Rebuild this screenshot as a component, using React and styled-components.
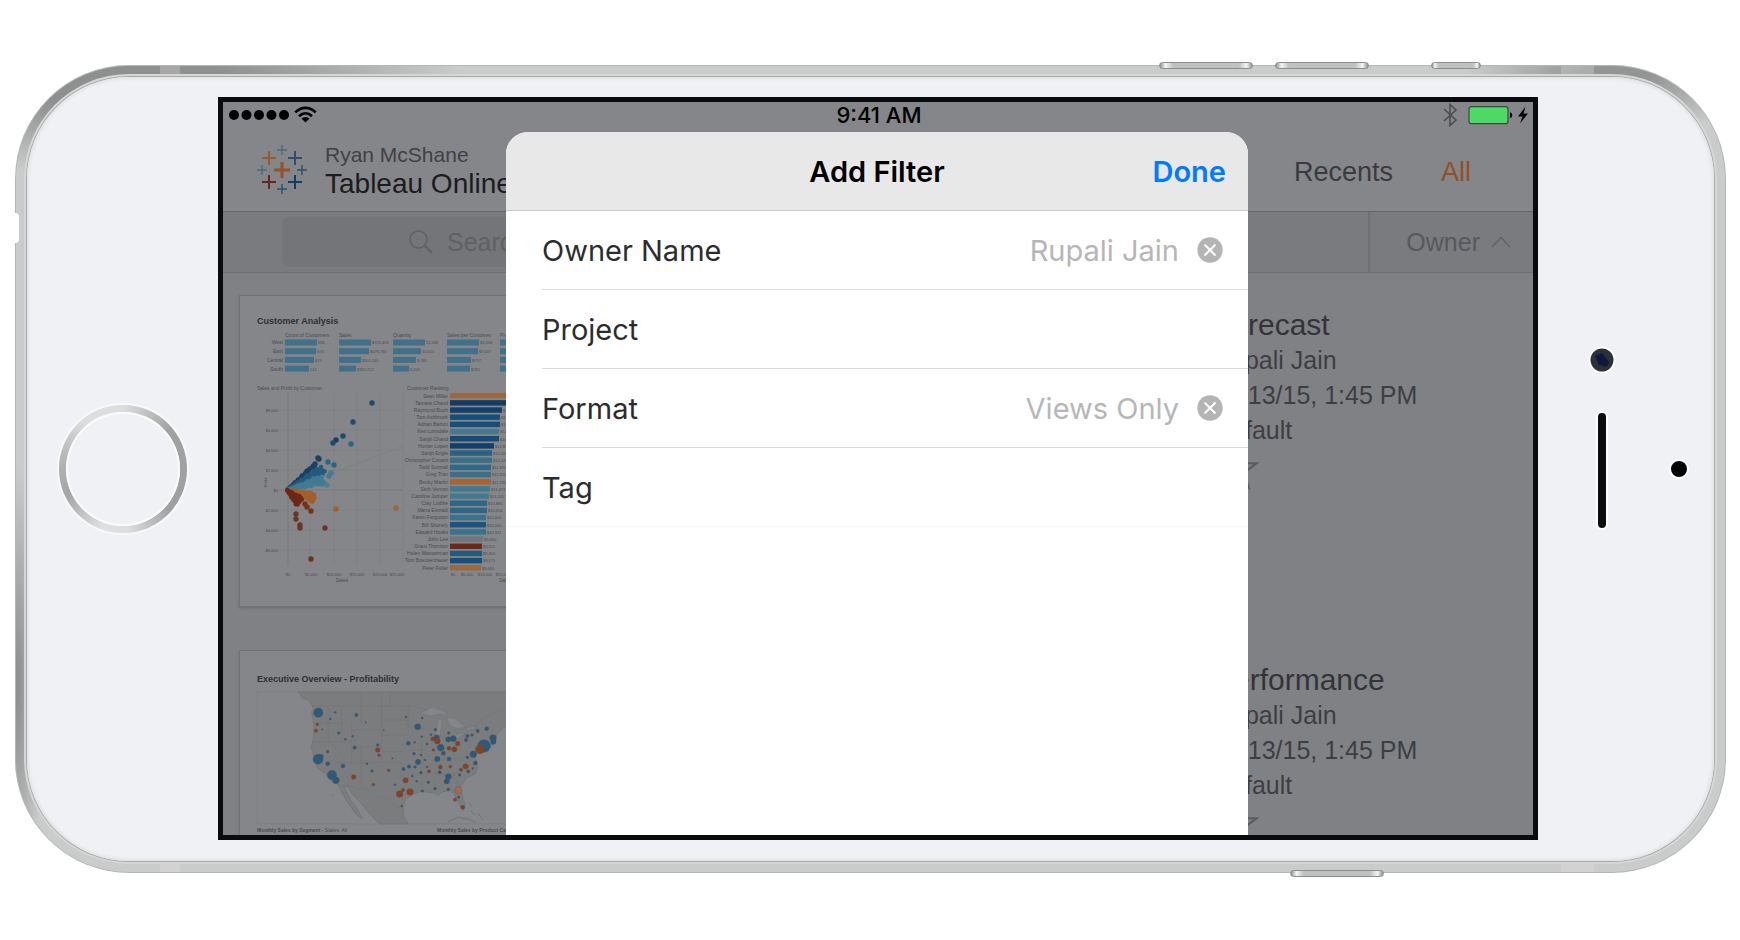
import { useState } from "react";
import styled, { createGlobalStyle } from "styled-components";

const GlobalStyle = createGlobalStyle`
	*, *::before, *::after {
		box-sizing: border-box;
	}
	body {
		margin: 0;
		background-color: #fff;
		font-family: "Liberation Sans", Arial, sans-serif;
	}
	button, input {
		font: inherit;
		color: inherit;
		background: none;
		border: none;
		padding: 0;
	}
	ul {
		list-style: none;
		margin: 0;
		padding: 0;
	}
`;

const REGIONS = ["West", "East", "Central", "South"];

const SUMMARY = [
	{ title: "Count of Customers", x: 45, widths: [32, 31, 29, 24], values: ["686", "674", "629", "512"] },
	{ title: "Sales", x: 99, widths: [32, 30, 22, 17], values: ["$725,458", "$678,781", "$501,240", "$391,722"] },
	{ title: "Quantity", x: 153, widths: [32, 28, 23, 16], values: ["12,266", "10,615", "8,780", "6,209"] },
	{ title: "Sales per Customer", x: 207, widths: [32, 31, 24, 23], values: ["$1,058", "$1,007", "$797", "$765"] },
	{ title: "Profit", x: 260, widths: [32, 31, 24, 23], values: ["", "", "", ""] },
];

const RANKING = [
	["Sean Miller", 60, "#9c6840", ""],
	["Tamara Chand", 60, "#123b66", ""],
	["Raymond Buch", 52, "#123f6c", "$14,"],
	["Tom Ashbrook", 50, "#174f7c", "$14,"],
	["Adrian Barton", 50, "#174f7c", "$14,"],
	["Ken Lonsdale", 49, "#46788e", "$14,"],
	["Sanjit Chand", 49, "#184a74", "$14,"],
	["Hunter Lopez", 44, "#123f6c", "$12,873"],
	["Sanjit Engle", 42, "#2a617f", "$12,209"],
	["Christopher Conant", 42, "#3a7088", "$12,129"],
	["Todd Sumrall", 41, "#30688a", "$11,890"],
	["Greg Tran", 41, "#3a7088", "$11,820"],
	["Becky Martin", 41, "#a76431", "$11,790"],
	["Seth Vernon", 40, "#417a90", "$11,471"],
	["Caroline Jumper", 39, "#417a90", "$11,165"],
	["Clay Ludtke", 37, "#2f6685", "$10,880"],
	["Maria Etezadi", 37, "#2f6685", "$10,664"],
	["Karen Ferguson", 36, "#39728c", "$10,606"],
	["Bill Shonely", 36, "#1c547e", "$10,500"],
	["Edward Hooks", 36, "#39728c", "$10,311"],
	["John Lee", 33, "#6c7780", "$9,800"],
	["Grant Thornton", 32, "#6c2818", "$9,351"],
	["Helen Wasserman", 32, "#225b80", "$9,300"],
	["Tom Boeckenhauer", 32, "#174f7c", "$9,175"],
	["Peter Fuller", 31, "#9c6840", "$9,063"],
];

const OUTLIERS = [
	[132, 107, "#1f4a6c"], [113, 126, "#1f4a6c"], [103, 140, "#1f4a6c"], [96, 144, "#1a4063"],
	[93, 147, "#1f4a6c"], [111, 148, "#2b6486"], [79, 163, "#1a4063"], [78, 162, "#1a4063"],
	[75, 168, "#1a4063"], [88, 166, "#2b6486"], [94, 169, "#2b6486"], [91, 177, "#417a92"],
	[89, 180, "#417a92"], [87, 189, "#4d7f94"], [96, 213, "#a35f2b"], [156, 212, "#9c6840"],
	[56, 218, "#6f321f"], [56, 223, "#6f321f"], [60, 229, "#6f321f"], [60, 232, "#6f321f"],
	[85, 232, "#6f321f"], [71, 263, "#6f321f"], [67, 211, "#7a3018"], [71, 215, "#7a3018"],
	[65, 208, "#7a3018"], [74, 202, "#a35f2b"], [72, 205, "#a35f2b"], [69, 203, "#a35f2b"],
];

// Fans of customers spreading out from the $0 / $0 corner
const FANS = [
	{ length: 36, from: -0.78, to: -0.62, color: "#1a4063" },
	{ length: 42, from: -0.64, to: -0.42, color: "#255a7c" },
	{ length: 38, from: -0.42, to: -0.14, color: "#417a92" },
	{ length: 28, from: 0.1, to: 0.45, color: "#a35f2b" },
	{ length: 18, from: 0.45, to: 1.05, color: "#6c2818" },
];

const fanDots = FANS.flatMap((fan) =>
	Array.from({ length: 46 }, (_, i) => {
		const r = (fan.length * (i + 1)) / 46;
		const angle = fan.from + (fan.to - fan.from) * ((i * 0.618) % 1);
		return { x: 47 + r * Math.cos(angle), y: 194 + r * Math.sin(angle), color: fan.color };
	})
);

const BLUE = "#2d5a7a";
const RUST = "#874222";

const CITIES = [
	[250, 218, 14, BLUE], [249, 358, 15, BLUE], [258, 350, 7, BLUE], [291, 405, 14, BLUE], [303, 421, 10, BLUE],
	[364, 225, 5, BLUE], [301, 217, 3, BLUE], [286, 237, 3, BLUE], [311, 279, 4, BLUE], [331, 298, 3, BLUE],
	[353, 289, 3, BLUE], [359, 323, 5, BLUE], [278, 335, 4, BLUE], [278, 371, 6, BLUE], [324, 378, 6, BLUE],
	[247, 253, 4, RUST], [243, 272, 5, RUST], [262, 268, 2, RUST], [356, 411, 7, RUST], [428, 330, 7, RUST],
	[428, 315, 4, BLUE], [432, 346, 4, RUST], [446, 270, 2, BLUE], [392, 247, 2, BLUE], [396, 371, 3, BLUE],
	[411, 393, 4, BLUE], [461, 391, 4, RUST], [415, 434, 4, RUST], [472, 355, 2, BLUE], [513, 231, 3, BLUE],
	[548, 260, 9, BLUE], [520, 310, 6, BLUE], [562, 234, 3, BLUE], [601, 269, 4, BLUE], [605, 292, 8, BLUE],
	[593, 297, 6, RUST], [607, 303, 9, RUST], [617, 323, 10, BLUE], [595, 330, 4, RUST], [607, 357, 8, BLUE],
	[625, 340, 6, BLUE], [640, 298, 8, BLUE], [655, 296, 9, BLUE], [668, 311, 7, RUST], [658, 328, 8, RUST],
	[642, 325, 6, RUST], [642, 357, 6, BLUE], [641, 279, 4, BLUE], [693, 300, 5, BLUE], [697, 288, 5, BLUE],
	[711, 285, 4, BLUE], [728, 273, 5, BLUE], [755, 266, 6, BLUE], [774, 294, 10, BLUE], [775, 305, 8, BLUE],
	[747, 318, 19, BLUE], [735, 328, 13, RUST], [715, 343, 10, BLUE], [697, 352, 4, BLUE], [721, 369, 6, BLUE],
	[692, 379, 8, RUST], [678, 389, 5, RUST], [713, 385, 3, RUST], [700, 394, 5, BLUE], [674, 405, 4, BLUE],
	[646, 380, 4, RUST], [616, 381, 6, RUST], [614, 397, 5, BLUE], [640, 410, 9, BLUE], [635, 424, 8, BLUE],
	[582, 394, 5, RUST], [580, 427, 4, BLUE], [549, 366, 8, BLUE], [537, 341, 4, BLUE], [558, 345, 3, BLUE],
	[522, 380, 5, BLUE], [540, 381, 4, BLUE], [506, 387, 5, BLUE], [558, 398, 4, BLUE], [512, 421, 8, RUST],
	[504, 450, 5, RUST], [494, 462, 10, RUST], [525, 456, 10, RUST], [562, 453, 4, BLUE], [600, 446, 4, BLUE],
	[500, 498, 3, RUST], [670, 451, 11, "#9c6d50"], [671, 471, 4, BLUE], [660, 479, 5, RUST], [683, 502, 6, RUST],
	[640, 448, 4, BLUE], [539, 307, 3, BLUE], [560, 290, 3, BLUE], [576, 312, 3, BLUE], [588, 284, 3, BLUE],
	[480, 434, 3, BLUE], [532, 408, 3, BLUE], [545, 424, 3, BLUE], [570, 360, 3, BLUE], [576, 381, 3, BLUE],
];

const WORKBOOKS = [
	{ title: "Forecast", owner: "Rupali Jain", date: "10/13/15, 1:45 PM", project: "Default", Chart: CustomerChart },
	{ title: "Performance", owner: "Rupali Jain", date: "10/13/15, 1:45 PM", project: "Default", Chart: ProfitMap },
];

const LOGO = [
	{ x: 25, y: 25, r: 8, w: 3, color: "#96502a" },
	{ x: 12, y: 13, r: 7, w: 2, color: "#965a2c" },
	{ x: 38, y: 13, r: 7, w: 2, color: "#2c4f6e" },
	{ x: 12, y: 37, r: 7, w: 2, color: "#65291c" },
	{ x: 38, y: 37, r: 7, w: 2, color: "#163a62" },
	{ x: 25, y: 5, r: 5, w: 1.4, color: "#4a6a7c" },
	{ x: 5, y: 25, r: 5, w: 1.4, color: "#4a6a7c" },
	{ x: 45, y: 25, r: 5, w: 1.4, color: "#2c4f6e" },
	{ x: 25, y: 44, r: 5, w: 1.4, color: "#2c4f6e" },
];

function CustomerChart() {
	return (
		<ChartSvg viewBox="0 0 310 310">
			<text x="17" y="28" fontSize="9" fontWeight="bold" fill="#2e2f32">Customer Analysis</text>
			{REGIONS.map((region, i) => (
				<text key={region} x="43" y={48 + i * 9} textAnchor="end">{region}</text>
			))}
			{SUMMARY.map((column) => (
				<g key={column.title}>
					<text x={column.x} y="41">{column.title}</text>
					{column.widths.map((width, i) => (
						<g key={i}>
							<rect x={column.x} y={43.5 + i * 8.7} width={width} height="6" fill="#41718a" />
							<text x={column.x + width + 1} y={48 + i * 9} fontSize="4">{column.values[i]}</text>
						</g>
					))}
				</g>
			))}
			<text x="17" y="94">Sales and Profit by Customer</text>
			<text x="167" y="94">Customer Ranking</text>
			<g stroke="#7b7c80" strokeWidth="0.6">
				{[70, 94, 117, 140, 163].map((x) => (
					<line key={x} x1={x} x2={x} y1="97" y2="269" />
				))}
				{[114, 134, 154, 174, 214, 234, 254].map((y) => (
					<line key={y} x1="39" x2="163" y1={y} y2={y} />
				))}
				<line x1="48" y1="194" x2="163" y2="150" />
				<line x1="48" y1="97" x2="48" y2="269" stroke="#6c6d71" strokeDasharray="3 1" />
				<line x1="39" y1="194" x2="163" y2="194" stroke="#6c6d71" strokeDasharray="3 1" />
			</g>
			{["$8,000", "$6,000", "$4,000", "$2,000", "$0", "-$2,000", "-$4,000", "-$6,000"].map((label, i) => (
				<text key={label} x="38" y={116 + i * 20} textAnchor="end" fontSize="4">{label}</text>
			))}
			{[["$0", 48], ["$5,000", 71], ["$10,000", 94], ["$15,000", 117], ["$20,000", 140], ["$25,000", 157]].map(([label, x]) => (
				<text key={label} x={x} y="280" textAnchor="middle" fontSize="4">{label}</text>
			))}
			<text x="102" y="286" textAnchor="middle">Sales</text>
			<text x="21" y="188" textAnchor="end" fontSize="4" transform="rotate(-90 21 182)">Profit</text>
			{fanDots.map((dot, i) => (
				<circle key={i} cx={dot.x} cy={dot.y} r="2.2" fill={dot.color} />
			))}
			{OUTLIERS.map(([x, y, color], i) => (
				<circle key={i} cx={x} cy={y} r="2.7" fill={color} />
			))}
			{RANKING.map(([name, width, color, value], i) => (
				<g key={name}>
					<text x="208" y={101.5 + i * 7.17} textAnchor="end">{name}</text>
					<rect x="210" y={97 + i * 7.17} width={width} height="5.4" fill={color} />
					<text x={211 + width} y={101.5 + i * 7.17} fontSize="4">{value}</text>
				</g>
			))}
			{[["$0", 213], ["$5,000", 227], ["$10,000", 245], ["$15,000", 263]].map(([label, x]) => (
				<text key={label} x={x} y="280" textAnchor="middle" fontSize="4">{label}</text>
			))}
			<text x="259" y="286">Sales</text>
		</ChartSvg>
	);
}

function ProfitMap() {
	return (
		<ChartSvg viewBox="0 0 310 310">
			<text x="17" y="31" fontSize="9" fontWeight="bold" fill="#2e2f32">Executive Overview - Profitability</text>
			<g transform="translate(-5 -11) scale(0.33333)">
				<path
					d="M190 155 L200 172 L222 182 L236 204 L230 216 L236 250 L236 290 L229 322 L236 350 L248 385 L270 400 L290 425 L308 434 L322 460 L345 498 L362 522 L382 536 L366 505 L345 478 L326 438 L338 440 L352 462 L382 494 L402 520 L434 552 L520 552 L506 530 L504 500 L512 478 L532 464 L556 455 L596 458 L610 466 L622 455 L648 452 L662 470 L674 494 L686 512 L690 492 L680 462 L676 440 L694 415 L722 400 L728 378 L720 350 L732 332 L752 332 L782 306 L784 284 L806 262 L850 250 L850 155 Z"
					fill="#7b7c7e"
					stroke="#68696c"
					strokeWidth="1.5"
				/>
				<g fill="none" stroke="#707174" strokeWidth="1.2">
					<path d="M232 198 H530 L560 206 L592 214 M670 270 L720 262 L748 232 L806 210" />
					<path d="M308 434 L345 438 L370 446 L400 448 L428 474 L450 470 L486 500 L506 504" />
					<path d="M236 250 H320 M280 198 V300 L330 360 M236 305 H350 M320 198 V305 M350 250 V370 M378 155 V250 M440 155 V320 M350 270 H436 M436 240 H520 M436 285 H515 M350 320 H440 M378 320 V440 M440 320 V368 M300 368 H500 M440 335 H510 M500 368 V410 M520 198 V300 M515 330 H575 M560 300 V440 M510 250 L575 270 M600 330 V440 M630 320 V360 M600 400 H680 M590 365 L700 350 M655 400 L672 440 M466 155 V198" />
				</g>
				<path
					d="M555 220 L590 202 L625 214 L640 225 L610 222 L585 228 Z M610 235 L622 240 L614 290 L602 286 Z M634 232 L662 236 L690 262 L668 266 L645 258 Z M650 290 L680 278 L690 282 L664 298 Z M694 264 L722 258 L720 266 L698 270 Z"
					fill="#85868a"
					stroke="#68696c"
				/>
				<path d="M640 545 L670 532 L704 538 L722 548 M700 486 L712 500 M706 512 L722 524 M730 520 L744 540 M292 463 L296 468" fill="none" stroke="#707174" strokeWidth="3" />
				<path d="M67 155 H930 V552 H67 Z" fill="none" stroke="#7a7b7e" strokeWidth="2" />
				{CITIES.map(([x, y, r, color], i) => (
					<circle key={i} cx={x} cy={y} r={r} fill={color} stroke="#4c4d52" strokeWidth="1" />
				))}
			</g>
			<text x="17" y="181" fontWeight="bold">Monthly Sales by Segment - <tspan fontWeight="normal">States: All</tspan></text>
			<text x="197" y="181" fontWeight="bold">Monthly Sales by Product Category</text>
		</ChartSvg>
	);
}

function TableauLogo() {
	return (
		<svg width="50" height="50" viewBox="0 0 50 50" aria-hidden="true">
			{LOGO.map(({ x, y, r, w, color }, i) => (
				<path key={i} d={`M${x - r} ${y}H${x + r}M${x} ${y - r}V${y + r}`} stroke={color} strokeWidth={w} />
			))}
		</svg>
	);
}

function SignalIcon() {
	return (
		<svg width="90" height="20" viewBox="0 0 90 20" aria-hidden="true">
			{[6, 18.5, 31, 43.5, 56].map((x) => (
				<circle key={x} cx={x} cy="10" r="5" />
			))}
			<g fill="none" stroke="#000" strokeWidth="2.6">
				<path d="M67.3 7.4 C73.5 1.3 81.5 1.3 87.7 7.4" />
				<path d="M71 11.3 C75 7.4 80 7.4 84 11.3" />
			</g>
			<path d="M73.5 13.6 C76 11.6 79 11.6 81.5 13.6 L77.5 17.5 Z" />
		</svg>
	);
}

function PowerIcon() {
	return (
		<svg width="88" height="24" viewBox="0 0 88 24" aria-hidden="true">
			<path d="M2 6 L14 17 L8 22.5 V1.5 L14 7 L2 18" fill="none" stroke="#4c4d50" strokeWidth="1.6" />
			<rect x="27" y="3.7" width="39" height="17" rx="2.5" fill="#4cd964" stroke="#3a4a40" strokeWidth="1.2" />
			<path d="M68 9.5 C71 10 71 14.5 68 15 Z" />
			<path d="M83.5 3.5 L76 13.5 H80.5 L78 20.5 L86 10.5 H81.5 Z" />
		</svg>
	);
}

function Sensors() {
	return (
		<svg width="128" height="248" viewBox="0 0 128 248" aria-hidden="true">
			<g stroke="#fff" strokeWidth="2">
				<circle cx="40" cy="15" r="12.5" fill="#2c3138" />
				<rect x="35" y="67" width="10" height="117" rx="5" fill="#0b0c0e" />
				<circle cx="117" cy="124" r="9" fill="#000" />
			</g>
			<path d="M33 11 L40 8 L47 17 L45 22 L37 20 Z" fill="#0e1740" />
		</svg>
	);
}

export default function App() {
	const [filters, setFilters] = useState([
		{ name: "Owner Name", value: "Rupali Jain" },
		{ name: "Project", value: "" },
		{ name: "Format", value: "Views Only" },
		{ name: "Tag", value: "" },
	]);
	const clearFilter = (name) =>
		setFilters(filters.map((f) => (f.name === name ? { ...f, value: "" } : f)));

	return (
		<Page>
			<GlobalStyle />
			<Phone>
				<SideButton $right="473px" $width="94px" />
				<SideButton $right="357px" $width="94px" />
				<SideButton $right="245px" $width="50px" />
				<SideButton $right="342px" $width="94px" $bottom />
				<Notch />
				<Antenna $side="left" $offset="145px" $width="20px" />
				<Antenna $side="right" $offset="132px" $width="33px" />
				<Face>
					<HomeButton aria-label="Home" />
					<Screen>
						<StatusBar>
							<SignalIcon />
							<Time>9:41 AM</Time>
							<PowerIcon />
						</StatusBar>
						<Header>
							<TableauLogo />
							<Account>
								<UserName>Ryan McShane</UserName>
								<SiteName>Tableau Online</SiteName>
							</Account>
							<Nav>
								<NavLink href="#recents">Recents</NavLink>
								<NavLink href="#all" $active>All</NavLink>
							</Nav>
						</Header>
						<SearchBar>
							<SearchField>
								<svg width="24" height="24" viewBox="0 0 24 24" fill="none" stroke="#5f6064" aria-hidden="true">
									<circle cx="9.5" cy="9.5" r="8.5" strokeWidth="1.5" />
									<path d="M16 16 L23 23" strokeWidth="2.2" />
								</svg>
								<SearchInput type="search" placeholder="Search" aria-label="Search" />
							</SearchField>
							<SortButton>
								Owner
								<svg width="20" height="12" viewBox="0 0 20 12" fill="none" stroke="#616266" strokeWidth="1.5" aria-hidden="true">
									<path d="M1 11 L10 1.5 L19 11" />
								</svg>
							</SortButton>
						</SearchBar>
						<Workbooks>
							{WORKBOOKS.map(({ title, owner, date, project, Chart }) => (
								<WorkbookRow key={title}>
									<Preview>
										<Chart />
									</Preview>
									<Workbook>
										<Preview />
										<Details>
											<WorkbookTitle>{title}</WorkbookTitle>
											<Meta>{owner}</Meta>
											<Meta>{date}</Meta>
											<Meta>{project}</Meta>
											<StarButton aria-label="Add to favorites">
												<svg width="46" height="46" viewBox="-23 -22 46 46" fill="none" stroke="#5a5b5f" strokeWidth="2.2">
													<path d="M0 -21.5 L5 -7 L20.4 -6.6 L8.1 2.6 L12.6 17.4 L0 8.5 L-12.6 17.4 L-8.1 2.6 L-20.4 -6.6 L-5 -7 Z" />
												</svg>
											</StarButton>
										</Details>
									</Workbook>
								</WorkbookRow>
							))}
						</Workbooks>
						<Overlay>
							<Dialog role="dialog" aria-labelledby="dialog-title">
								<DialogHeader>
									<DialogTitle id="dialog-title">Add Filter</DialogTitle>
									<DoneButton>Done</DoneButton>
								</DialogHeader>
								<ul>
									{filters.map(({ name, value }) => (
										<FilterRow key={name}>
											<FilterName>{name}</FilterName>
											{value && (
												<>
													<FilterValue>{value}</FilterValue>
													<ClearButton aria-label={`Clear ${name}`} onClick={() => clearFilter(name)}>
														<svg width="26" height="26" viewBox="0 0 26 26">
															<circle cx="13" cy="13" r="12.7" fill="#b4b4b4" />
															<path d="M7.5 7.5 L18.5 18.5 M18.5 7.5 L7.5 18.5" stroke="#fff" strokeWidth="2" />
														</svg>
													</ClearButton>
												</>
											)}
										</FilterRow>
									))}
								</ul>
							</Dialog>
						</Overlay>
					</Screen>
					<Sensors />
				</Face>
			</Phone>
		</Page>
	);
}

const Page = styled.main`
	padding: 65px 14px 67px 15px;
`;

const Phone = styled.div`
	position: relative;
	padding: 12px;
	border-radius: 114px;
	background:
		radial-gradient(ellipse 330px 90px at 120px 20px, #858686 30%, transparent 100%),
		radial-gradient(ellipse 150px 60px at calc(100% - 110px) 10px, #8a8b8b 20%, transparent 100%),
		radial-gradient(ellipse 30px 220px at 0 620px, #858686 10%, transparent 100%),
		#c6c8c7;
	box-shadow: inset 0 0 0 1px #b4b6b5, inset 0 0 0 9px rgba(255, 255, 255, 0.08);
`;

const Face = styled.div`
	position: relative;
	display: grid;
	grid-template-columns: 191px minmax(0, 1fr) 176px;
	align-items: center;
	justify-items: center;
	padding: 20px 0 21px;
	border-radius: 102px;
	background-color: #f0f1f4;
	box-shadow: 0 0 0 1px #a9abaa, 0 0 0 3px #d5d7d6, inset 0 0 3px 2px #e2e3e5;
`;

const SideButton = styled.span`
	position: absolute;
	right: ${({ $right }) => $right};
	${({ $bottom }) => ($bottom ? "bottom: -4px;" : "top: -3px;")}
	width: ${({ $width }) => $width};
	height: 7px;
	border: 1px solid #8c8d8d;
	border-radius: 4px;
	background: linear-gradient(90deg, #8f9090, #f4f4f4 6%, #bfc0c0 14%, #bfc0c0 86%, #f4f4f4 94%, #8f9090);
`;

const Antenna = styled.span`
	position: absolute;
	top: 1px;
	bottom: 1px;
	${({ $side, $offset }) => `${$side}: ${$offset};`}
	width: ${({ $width }) => $width};
	background-color: rgba(225, 226, 226, 0.3);
`;

const Notch = styled.span`
	position: absolute;
	top: 148px;
	left: -4px;
	width: 8px;
	height: 30px;
	border-radius: 4px;
	background-color: #fff;
`;

const HomeButton = styled.button`
	width: 128px;
	height: 128px;
	border-radius: 50%;
	border: 7px solid transparent;
	background:
		linear-gradient(#f0f1f4, #f0f1f4) padding-box,
		conic-gradient(#dcdddd, #a0a1a1 50deg, #9fa0a0 130deg, #dcdddd 175deg, #dfe0e0 200deg, #a4a5a5 245deg, #b4b5b5 280deg, #dcdddd 320deg) border-box;
	box-shadow: 0 0 0 2px #f8f9fa, inset 0 0 0 2px #fbfbfc;
`;

const Screen = styled.div`
	position: relative;
	width: 100%;
	aspect-ratio: 1320 / 743;
	border: 5px solid #0a0b0f;
	background-color: #808185;
	overflow: hidden;
`;

const StatusBar = styled.div`
	display: grid;
	grid-template-columns: 1fr auto 1fr;
	align-items: center;
	height: 24px;
	padding: 0 3px 0 5px;
	background-color: #858689;

	& > :last-child {
		justify-self: end;
	}
`;

const Time = styled.span`
	font-family: Inter, "Liberation Sans", sans-serif;
	font-size: 22px;
	font-weight: 500;
	line-height: 26px;
	color: #000;
`;

const Header = styled.header`
	display: flex;
	align-items: center;
	height: 86px;
	padding: 2px 62px 0 34px;
	border-bottom: 1px solid #636468;
	background-color: #858689;
`;

const Account = styled.div`
	display: flex;
	flex-direction: column;
	margin-left: 18px;
`;

const UserName = styled.span`
	font-size: 21px;
	line-height: 28px;
	color: #404144;
`;

const SiteName = styled.span`
	font-size: 28px;
	line-height: 30px;
	color: #1b1c1e;
`;

const Nav = styled.nav`
	display: flex;
	gap: 48px;
	margin-left: auto;
	padding-top: 4px;
`;

const NavLink = styled.a`
	font-size: 27px;
	line-height: 30px;
	text-decoration: none;
	color: ${({ $active }) => ($active ? "#8f5029" : "#3a3b3e")};
`;

const SearchBar = styled.div`
	display: flex;
	align-items: center;
	justify-content: space-between;
	height: 61px;
	padding-left: 59px;
	border-bottom: 1px solid #6d6e72;
	background-color: #7a7b7f;
`;

const SearchField = styled.label`
	display: flex;
	align-items: center;
	gap: 14px;
	width: 60%;
	height: 50px;
	padding-left: 127px;
	border-radius: 8px;
	background-color: #747579;
`;

const SearchInput = styled.input`
	flex: 1;
	min-width: 0;
	font-size: 25px;
	outline: none;

	&::placeholder {
		color: #5f6064;
		opacity: 1;
	}
`;

const SortButton = styled.button`
	display: flex;
	align-items: center;
	justify-content: flex-end;
	gap: 11px;
	width: 165px;
	height: 60px;
	padding-right: 22px;
	border-left: 2px solid #707175;
	font-size: 25px;
	color: #57585c;
`;

const Workbooks = styled.div`
	display: flex;
	flex-direction: column;
	gap: 43px;
	padding: 22px 16px;
`;

const WorkbookRow = styled.div`
	display: grid;
	grid-template-columns: repeat(2, minmax(0, 1fr));
	gap: 16px;
`;

const Workbook = styled.article`
	display: flex;
	gap: 15px;
`;

const Preview = styled.div`
	flex: none;
	width: 312px;
	height: 312px;
	border: 1px solid #727377;
	box-shadow: 0 1px 2px #6c6d71;
	background-color: #858689;
`;

const ChartSvg = styled.svg`
	display: block;
	width: 100%;
	height: 100%;
	font-size: 5px;
	fill: #4a4b4e;
`;

const Details = styled.div`
	display: flex;
	flex-direction: column;
	align-items: flex-start;
	padding-top: 11px;
	white-space: nowrap;
`;

const WorkbookTitle = styled.h2`
	margin: 0;
	font-size: 30px;
	font-weight: normal;
	line-height: 37px;
	color: #333437;
`;

const Meta = styled.span`
	font-size: 25px;
	line-height: 35px;
	color: #3d3e41;
`;

const StarButton = styled.button`
	height: 46px;
	line-height: 0;
`;

const Overlay = styled.div`
	position: absolute;
	inset: 0;
	display: flex;
	justify-content: center;
	padding: 30px 2px 0 0;
`;

const Dialog = styled.section`
	width: 742px;
	border-radius: 22px 22px 0 0;
	overflow: hidden;
	font-family: Inter, "Liberation Sans", sans-serif;
	font-size: 29px;
	background-color: #fff;
`;

const DialogHeader = styled.header`
	display: grid;
	grid-template-columns: 1fr auto 1fr;
	align-items: center;
	height: 79px;
	padding: 0 22px;
	border-bottom: 1px solid #cbcbcc;
	background-color: #e8e8e8;
`;

const DialogTitle = styled.h1`
	grid-column: 2;
	margin: 0;
	font-size: 29px;
	font-weight: 600;
	color: #000;
`;

const DoneButton = styled.button`
	justify-self: end;
	font-size: 29px;
	font-weight: 600;
	color: #007aff;
	cursor: pointer;
`;

const FilterRow = styled.li`
	display: flex;
	align-items: center;
	height: 79px;
	margin-left: 36px;
	padding-right: 25px;
	border-bottom: 1px solid #dcdcdd;

	&:last-child {
		margin-left: 0;
		padding-left: 36px;
		border-color: #f7f7f7;
	}
`;

const FilterName = styled.span`
	color: #2b2c2e;
`;

const FilterValue = styled.span`
	margin-left: auto;
	color: #b6b6b7;
`;

const ClearButton = styled.button`
	margin-left: 18px;
	line-height: 0;
	cursor: pointer;
`;
